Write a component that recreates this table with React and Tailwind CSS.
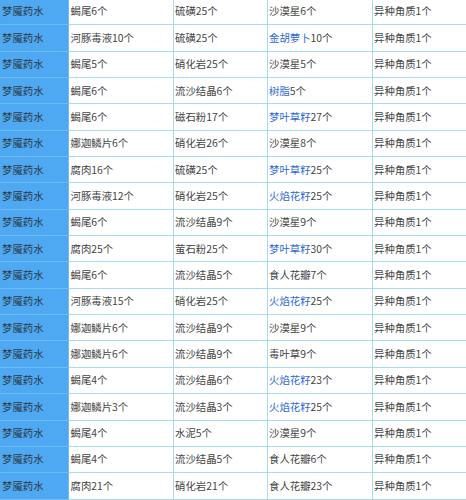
import React from "react";

const rows = [
  ["蝎尾6个", "硫磺25个", ["", "沙漠星6个"]],
  ["河豚毒液10个", "硫磺25个", ["金胡萝卜", "10个"]],
  ["蝎尾5个", "硝化岩25个", ["", "沙漠星5个"]],
  ["蝎尾6个", "流沙结晶6个", ["树脂", "5个"]],
  ["蝎尾6个", "磁石粉17个", ["梦叶草籽", "27个"]],
  ["娜迦鳞片6个", "硝化岩26个", ["", "沙漠星8个"]],
  ["腐肉16个", "硫磺25个", ["梦叶草籽", "25个"]],
  ["河豚毒液12个", "硝化岩25个", ["火焰花籽", "25个"]],
  ["蝎尾6个", "流沙结晶9个", ["", "沙漠星9个"]],
  ["腐肉25个", "萤石粉25个", ["梦叶草籽", "30个"]],
  ["蝎尾6个", "流沙结晶5个", ["", "食人花瓣7个"]],
  ["河豚毒液15个", "硝化岩25个", ["火焰花籽", "25个"]],
  ["娜迦鳞片6个", "流沙结晶9个", ["", "沙漠星9个"]],
  ["娜迦鳞片6个", "流沙结晶9个", ["", "毒叶草9个"]],
  ["蝎尾4个", "流沙结晶6个", ["火焰花籽", "23个"]],
  ["娜迦鳞片3个", "流沙结晶3个", ["火焰花籽", "25个"]],
  ["蝎尾4个", "水泥5个", ["", "沙漠星9个"]],
  ["蝎尾4个", "流沙结晶5个", ["", "食人花瓣6个"]],
  ["腐肉21个", "硝化岩21个", ["", "食人花瓣23个"]],
];

export default function App() {
  return (
    <div
      className="w-[466px] h-[500px] overflow-hidden bg-white"
      style={{ fontFamily: '"Noto Sans CJK SC", "Noto Sans", sans-serif' }}
    >
      <table className="-mt-[2px] -ml-[1px] w-[520px] table-fixed border-collapse text-[10.4px] leading-none text-[#444]">
        <colgroup>
          <col className="w-[69px]" />
          <col className="w-[104.5px]" />
          <col className="w-[94px]" />
          <col className="w-[105px]" />
          <col className="w-[147.5px]" />
        </colgroup>
        <tbody>
          {rows.map((r, i) => (
            <tr key={i} className="h-[26.35px]">
              <td className="border border-[#6ebcf4] bg-[#4ea9f2] pl-[2px] text-[#2d3b4a] whitespace-nowrap">
                梦魇药水
              </td>
              <td className="border border-[#a6dcec] pl-[1.5px] whitespace-nowrap">{r[0]}</td>
              <td className="border border-[#a6dcec] pl-[1.5px] whitespace-nowrap">{r[1]}</td>
              <td className="border border-[#a6dcec] pl-[1.5px] whitespace-nowrap">
                {r[2][0] && <span className="text-[#2e6ad6]">{r[2][0]}</span>}
                {r[2][1]}
              </td>
              <td className="border border-[#a6dcec] pl-[1.5px] whitespace-nowrap">异种角质1个</td>
            </tr>
          ))}
        </tbody>
      </table>
    </div>
  );
}
